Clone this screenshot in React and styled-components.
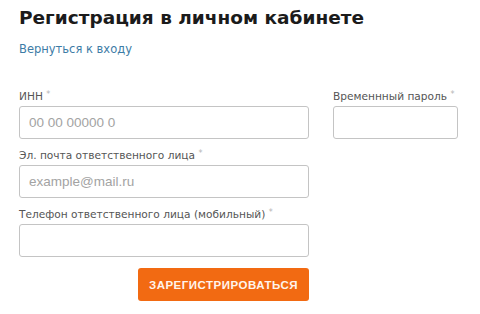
import React from 'react';
import styled, { createGlobalStyle } from 'styled-components';

const GlobalStyle = createGlobalStyle`
  html, body {
    margin: 0;
    padding: 0;
    background: #ffffff;
  }
  * {
    box-sizing: border-box;
  }
`;

const fields = [
  { id: 'inn', label: 'ИНН', placeholder: '00 00 00000 0' },
  { id: 'email', label: 'Эл. почта ответственного лица', placeholder: 'example@mail.ru' },
  { id: 'phone', label: 'Телефон ответственного лица (мобильный)', placeholder: '' },
];

export default function App() {
  return (
    <>
      <GlobalStyle />
      <Page>
        <Title>Регистрация в личном кабинете</Title>
        <BackLink href="#">Вернуться к входу</BackLink>
        <Form onSubmit={e => e.preventDefault()}>
          <MainColumn>
            {fields.map(f => (
              <Field key={f.id} {...f} />
            ))}
            <Actions>
              <SubmitButton type="submit">Зарегистрироваться</SubmitButton>
            </Actions>
          </MainColumn>
          <SideColumn>
            <Field id="password" label="Временнный пароль" placeholder="" />
          </SideColumn>
        </Form>
      </Page>
    </>
  );
}

const Field = ({ id, label, placeholder }) => (
  <FieldBox>
    <Label htmlFor={id}>
      {label} <Required>*</Required>
    </Label>
    <Input id={id} placeholder={placeholder} />
  </FieldBox>
);

const Page = styled.div`
  width: 480px;
  height: 314px;
  padding: 6px 0 0 19px;
  font-family: 'DejaVu Sans', Verdana, sans-serif;
  overflow: hidden;
`;

const Title = styled.h1`
  margin: 0;
  font-size: 18.5px;
  font-weight: 700;
  line-height: 24px;
  color: #1b1b1b;
`;

const BackLink = styled.a`
  display: inline-block;
  margin-top: 11px;
  font-size: 11.5px;
  line-height: 16px;
  color: #3d7ca6;
  text-decoration: none;
`;

const Form = styled.form`
  display: flex;
  gap: 24px;
  margin-top: 29px;
`;

const MainColumn = styled.div`
  width: 290px;
  display: flex;
  flex-direction: column;
  gap: 6px;
`;

const SideColumn = styled.div`
  width: 125px;
`;

const FieldBox = styled.div`
  display: flex;
  flex-direction: column;
`;

const Label = styled.label`
  font-size: 10.6px;
  line-height: 17px;
  height: 17px;
  color: #555555;
  margin-bottom: 3px;
  white-space: nowrap;
`;

const Required = styled.span`
  font-size: 8px;
  color: #b5b5b5;
  vertical-align: 3px;
`;

const Input = styled.input`
  height: 33px;
  width: 100%;
  border: 1px solid #c4c4c4;
  border-radius: 3px;
  padding: 0 9px;
  font-family: 'Liberation Sans', Arial, sans-serif;
  font-size: 13.5px;
  color: #333333;
  background: #ffffff;
  outline: none;

  &::placeholder {
    color: #a3a3a3;
  }
`;

const Actions = styled.div`
  display: flex;
  justify-content: flex-end;
  margin-top: 5px;
`;

const SubmitButton = styled.button`
  width: 171px;
  height: 33px;
  border: none;
  border-radius: 3px;
  background: #f26a12;
  color: #fff4ec;
  font-family: 'Liberation Sans', Arial, sans-serif;
  font-size: 11.5px;
  font-weight: 700;
  text-transform: uppercase;
  letter-spacing: 0.5px;
  cursor: pointer;
`;
